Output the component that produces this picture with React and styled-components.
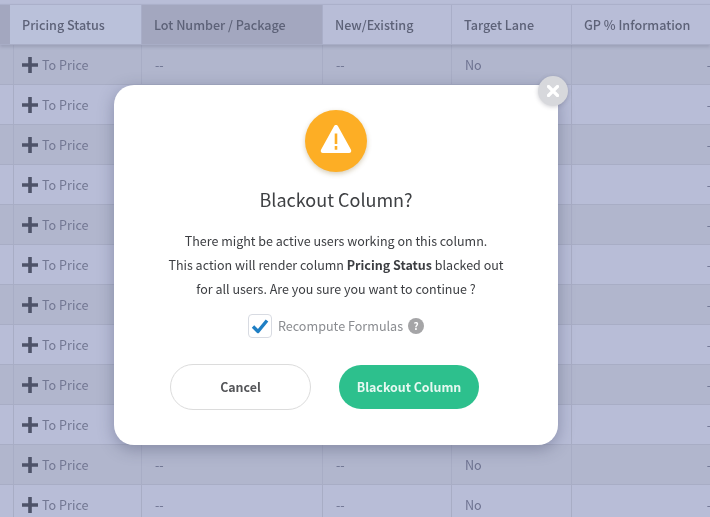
import React from "react";
import styled, { createGlobalStyle } from "styled-components";

const GlobalStyle = createGlobalStyle`
  html, body {
    margin: 0;
    padding: 0;
    height: 100%;
    overflow: hidden;
    font-family: "Noto Sans CJK SC", "Noto Sans", sans-serif;
  }
  * { box-sizing: border-box; }
`;

const COLUMNS = "10px 132px 181px 129px 120px 139px";

// ----------- Table behind the dialog -----------
const Page = styled.div`
  position: relative;
  width: 710px;
  height: 517px;
  overflow: hidden;
  background: #b8bdd7;
  padding-top: 4px;
  filter: blur(0.35px);
`;

const Row = styled.div`
  display: grid;
  grid-template-columns: ${COLUMNS};
  height: 40px;
  border-bottom: 1px solid #a8adc5;
  background: ${(p) => (p.$odd ? "#b1b6cd" : "#b8bdd7")};
`;

const HeaderRow = styled(Row)`
  height: 41px;
  background: #b8bdd7;
  border-top: 1px solid #abb0ca;
  border-bottom: 1px solid #a8adc6;
  box-shadow: 0 2px 3px rgba(90, 95, 125, 0.25);
  position: relative;
`;

const HeadCell = styled.div`
  display: flex;
  align-items: center;
  padding-left: 12px;
  font-size: 12.6px;
  font-weight: 500;
  color: #5d6278;
  white-space: nowrap;
  border-right: 1px solid #a9aec8;
  background: ${(p) => (p.$shade === "dark" ? "#a3a7bf" : p.$shade === "light" ? "#bac1da" : "transparent")};
`;

const Cell = styled.div`
  display: flex;
  align-items: center;
  padding-left: ${(p) => p.$pad || "13px"};
  font-size: 12.6px;
  color: #6d7290;
  white-space: nowrap;
  border-right: 1px solid #a8adc5;
  min-width: 0;
`;

const EndCell = styled(Cell)`
  justify-content: flex-end;
  padding: 0;
  border-right: 0;
  overflow: hidden;
`;

const PriceStatus = styled.div`
  display: flex;
  align-items: center;
  gap: 4px;
  color: #727792;
`;

const PlusIcon = styled.svg`
  width: 16px;
  height: 16px;
  flex: none;
  fill: #4e5369;
`;

// ----------- Dialog -----------
const Overlay = styled.div`
  position: absolute;
  inset: 0;
  padding: 85px 0 0 114px;
`;

const Dialog = styled.div`
  position: relative;
  width: 444px;
  height: 360px;
  padding-top: 25px;
  background: #fff;
  border-radius: 20px;
  box-shadow: 0 4px 16px rgba(50, 55, 85, 0.35);
  display: flex;
  flex-direction: column;
  align-items: center;
`;

const CloseButton = styled.div`
  position: absolute;
  top: -9px;
  right: -10px;
  width: 30px;
  height: 30px;
  border-radius: 50%;
  background: #d7d8dc;
  box-shadow: 0 1px 4px rgba(60, 60, 80, 0.25);
  display: flex;
  align-items: center;
  justify-content: center;
`;

const WarningBadge = styled.div`
  width: 62px;
  height: 62px;
  border-radius: 50%;
  background: #fdae25;
  box-shadow: 0 2px 5px rgba(120, 90, 20, 0.3);
  display: flex;
  align-items: center;
  justify-content: center;
`;

const WarningGlyph = styled.svg`
  width: 32px;
  height: 30px;
  margin-bottom: 5px;
`;

const Title = styled.h2`
  margin: 13px 0 0;
  font-size: 18px;
  line-height: 28px;
  font-weight: 400;
  color: #3f4144;
`;

const Message = styled.p`
  margin: 16px 0 0;
  width: 360px;
  text-align: center;
  font-size: 12.5px;
  line-height: 24px;
  color: #3c3e42;

  b {
    font-weight: 700;
  }
`;

const CheckRow = styled.div`
  margin-top: 13px;
  display: flex;
  align-items: center;
`;

const CheckBox = styled.div`
  width: 24px;
  height: 24px;
  border: 1px solid #d8dbe2;
  border-radius: 4px;
  background: #fff;
  display: flex;
  align-items: center;
  justify-content: center;
`;

const CheckLabel = styled.span`
  margin-left: 6px;
  font-size: 12.6px;
  line-height: 24px;
  color: #8a8c90;
`;

const HelpDot = styled.span`
  margin-left: 5px;
  width: 16px;
  height: 16px;
  border-radius: 50%;
  background: #a5a5a7;
  color: #fff;
  font-size: 10px;
  font-weight: 700;
  line-height: 16px;
  text-align: center;
`;

const Buttons = styled.div`
  margin-top: 26px;
  margin-right: 23px;
  display: flex;
  align-items: center;
  gap: 28px;
`;

const Pill = styled.button`
  width: ${(p) => (p.$primary ? "140px" : "141px")};
  height: ${(p) => (p.$primary ? "44px" : "46px")};
  border-radius: 23px;
  border: ${(p) => (p.$primary ? "0" : "1px solid #dcdcdc")};
  background: ${(p) => (p.$primary ? "#2dc08d" : "#fff")};
  color: ${(p) => (p.$primary ? "#e6f8f1" : "#555659")};
  font-family: inherit;
  font-size: 12.4px;
  font-weight: 700;
  padding: 0;
`;

const rows = [
  { lot: "--", isNew: "--", lane: "No" },
  {},
  {},
  {},
  {},
  {},
  {},
  {},
  {},
  {},
  { lot: "--", isNew: "--", lane: "No" },
  { lot: "--", isNew: "--", lane: "No" },
];

function App() {
  return (
    <Page>
      <GlobalStyle />
      <HeaderRow>
        <HeadCell $shade="dark" />
        <HeadCell $shade="light">Pricing Status</HeadCell>
        <HeadCell $shade="dark">Lot Number / Package</HeadCell>
        <HeadCell>New/Existing</HeadCell>
        <HeadCell>Target Lane</HeadCell>
        <HeadCell>GP % Information</HeadCell>
      </HeaderRow>

      {rows.map((row, i) => (
        <Row key={i} $odd={i % 2 === 0}>
          <Cell />
          <Cell $pad="12px">
            <PriceStatus>
              <PlusIcon viewBox="0 0 16 16">
                <path d="M6.2 0h3.6v6.2H16v3.6H9.8V16H6.2V9.8H0V6.2h6.2z" />
              </PlusIcon>
              To Price
            </PriceStatus>
          </Cell>
          <Cell>{row.lot}</Cell>
          <Cell>{row.isNew}</Cell>
          <Cell>{row.lane}</Cell>
          <EndCell>-</EndCell>
        </Row>
      ))}

      <Overlay>
        <Dialog>
          <CloseButton>
            <svg width="12" height="12" viewBox="0 0 12 12">
              <path d="M1.5 1.5l9 9M10.5 1.5l-9 9" stroke="#fff" strokeWidth="3.2" strokeLinecap="round" />
            </svg>
          </CloseButton>

          <WarningBadge>
            <WarningGlyph viewBox="0 0 32 30">
              <path
                fillRule="evenodd"
                fill="#fff"
                d="M16 1c.9 0 1.6.5 2 1.2l13 23.6c.8 1.5-.2 3.2-1.9 3.2H2.9c-1.7 0-2.7-1.7-1.9-3.2L14 2.2C14.4 1.5 15.1 1 16 1zM14.7 9.5v10.5h2.6V9.5zM14.7 22v3.8h2.6V22z"
              />
            </WarningGlyph>
          </WarningBadge>

          <Title>Blackout Column?</Title>

          <Message>
            There might be active users working on this column.
            <br />
            This action will render column <b>Pricing Status</b> blacked out
            <br />
            for all users. Are you sure you want to continue ?
          </Message>

          <CheckRow>
            <CheckBox>
              <svg width="18" height="16" viewBox="0 0 18 16">
                <path d="M2 8.5l5 5L16 2.5" fill="none" stroke="#1f7fc4" strokeWidth="3.4" strokeLinejoin="round" />
              </svg>
            </CheckBox>
            <CheckLabel>Recompute Formulas</CheckLabel>
            <HelpDot>?</HelpDot>
          </CheckRow>

          <Buttons>
            <Pill>Cancel</Pill>
            <Pill $primary>Blackout Column</Pill>
          </Buttons>
        </Dialog>
      </Overlay>
    </Page>
  );
}

export default App;
